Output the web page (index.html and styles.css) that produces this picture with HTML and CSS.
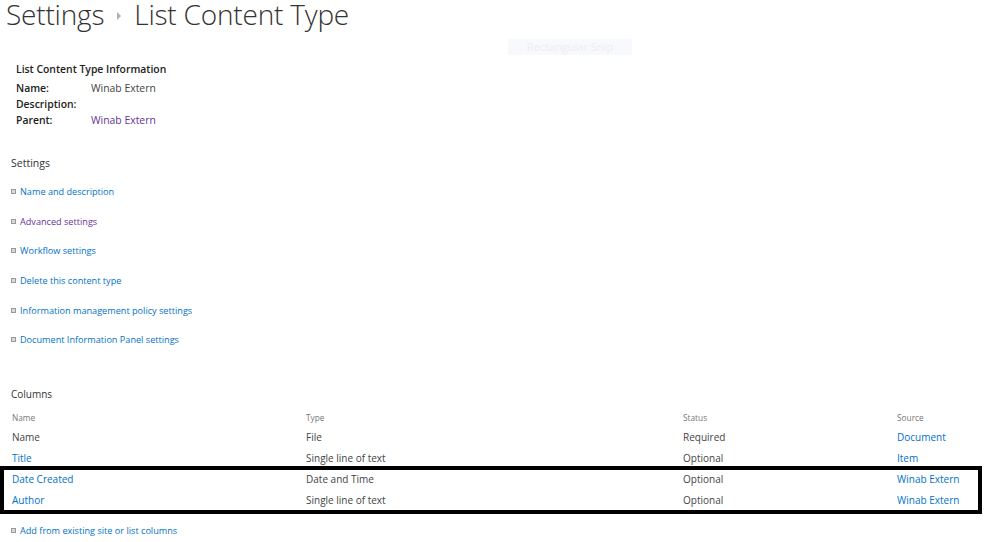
FILE: index.html
```html
<!DOCTYPE html>
<html>
<head>
<meta charset="utf-8">
<link rel="stylesheet" href="styles.css">
</head>
<body>
<div class="page">
  <h1 class="title"><span>Settings</span><span class="crumb-arrow"></span><span>List Content Type</span></h1>
  <div class="snip">Rectangular Snip</div>

  <section class="info">
    <div class="info-head">List Content Type Information</div>
    <div class="info-row"><span class="info-label">Name:</span><span class="info-val">Winab Extern</span></div>
    <div class="info-row"><span class="info-label">Description:</span><span class="info-val"></span></div>
    <div class="info-row"><span class="info-label">Parent:</span><a class="info-val visited" href="#">Winab Extern</a></div>
  </section>

  <section class="settings">
    <div class="sec-head">Settings</div>
    <ul class="links">
      <li><span class="bullet"></span><a href="#">Name and description</a></li>
      <li><span class="bullet"></span><a class="visited" href="#">Advanced settings</a></li>
      <li><span class="bullet"></span><a href="#">Workflow settings</a></li>
      <li><span class="bullet"></span><a href="#">Delete this content type</a></li>
      <li><span class="bullet"></span><a href="#">Information management policy settings</a></li>
      <li><span class="bullet"></span><a href="#">Document Information Panel settings</a></li>
    </ul>
  </section>

  <section class="columns">
    <div class="sec-head">Columns</div>
    <div class="grid">
      <div class="row head"><span>Name</span><span>Type</span><span>Status</span><span>Source</span></div>
      <div class="row"><span>Name</span><span>File</span><span>Required</span><a href="#">Document</a></div>
      <div class="row"><a href="#">Title</a><span>Single line of text</span><span>Optional</span><a href="#">Item</a></div>
      <div class="row"><a href="#">Date Created</a><span>Date and Time</span><span>Optional</span><a href="#">Winab Extern</a></div>
      <div class="row"><a href="#">Author</a><span>Single line of text</span><span>Optional</span><a href="#">Winab Extern</a></div>
      <div class="highlight"></div>
    </div>
    <div class="add"><span class="bullet"></span><a href="#">Add from existing site or list columns</a></div>
  </section>
</div>
</body>
</html>
```
FILE: styles.css
```css
* { box-sizing: border-box; }
html, body { margin: 0; padding: 0; background: #fff; }
body {
  font-family: "Open Sans", "Noto Sans", sans-serif;
  font-size: 10px;
  color: #444;
  width: 998px;
  height: 542px;
  overflow: hidden;
}
a { color: #0072c6; text-decoration: none; }
a.visited { color: #663399; }
.page { position: relative; }

.title {
  margin: 0;
  padding: 0 0 0 6px;
  height: 30px;
  font-weight: 300;
  font-size: 28px;
  line-height: 28px;
  color: #333;
  display: flex;
  align-items: flex-start;
  letter-spacing: -0.2px;
}
.crumb-arrow {
  display: inline-block;
  width: 0; height: 0;
  border-top: 4px solid transparent;
  border-bottom: 4px solid transparent;
  border-left: 4px solid #b0b0b0;
  margin: 12px 13px 0 13px;
}
.snip {
  position: absolute;
  left: 508px; top: 39px;
  width: 124px; height: 16px;
  background: #f8f9fc;
  color: #eceef2;
  font-size: 11px;
  line-height: 16px;
  text-align: center;
}

.info { padding: 31px 0 0 16px; font-size: 10.4px; }
.info-head { font-weight: 600; color: #222; height: 19px; line-height: 17px; }
.info-row { display: flex; height: 16px; line-height: 16px; }
.info-label { width: 75px; font-weight: 600; color: #222; }
.info-val { color: #444; }
.info-row a.info-val { color: #663399; }

.settings { padding: 27px 0 0 11px; }
.sec-head { font-size: 10.5px; color: #333; height: 16px; line-height: 16px; }
.links { list-style: none; margin: 0; padding: 13px 0 0 0; font-size: 9.15px; }
.links li { display: flex; align-items: flex-start; height: 29.7px; line-height: 16px; }
.bullet {
  display: inline-block;
  width: 5px; height: 5px;
  border: 1px solid #9a9a9a;
  background: #d8d8d8;
  margin-right: 4px;
  margin-top: 5px;
  flex: none;
}

.columns { padding: 24px 0 0 0; }
.columns .sec-head { padding-left: 11px; font-size: 10px; }
.grid { position: relative; margin-top: 5px; }
.row {
  display: grid;
  grid-template-columns: 294px 377px 214px 1fr;
  padding-left: 12px;
  height: 21px;
  line-height: 21px;
  font-size: 10px;
}
.row.head { font-size: 8.3px; color: #777; height: 20px; }
.highlight {
  position: absolute;
  left: 0; top: 59px;
  width: 982px; height: 48px;
  border: 4px solid #000;
}
.add { display: flex; align-items: flex-start; padding: 12px 0 0 11px; line-height: 16px; font-size: 9.15px; }
```
